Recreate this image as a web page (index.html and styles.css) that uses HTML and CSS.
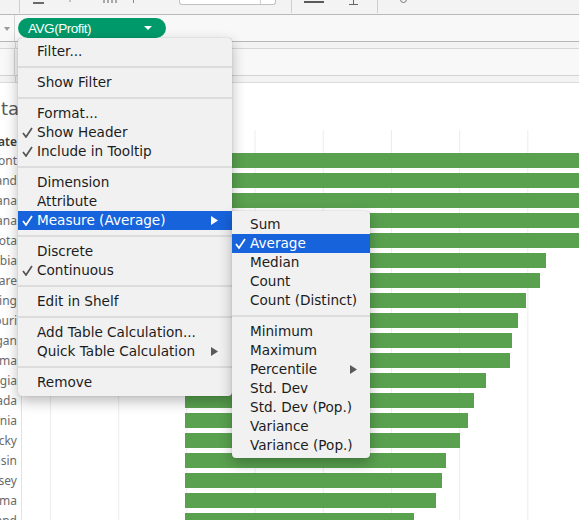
FILE: index.html
```html
<!DOCTYPE html>
<html>
<head>
<meta charset="utf-8">
<link rel="stylesheet" href="styles.css">
</head>
<body>
<div class="toolbar">
  <div class="tb-vline tb-a"></div>
  <div class="tb-under"></div>
  <div class="tb-dot"></div>
  <div class="tb-bars"><i></i><i></i><i></i><i></i></div>
  <div class="tb-tick"></div>
  <div class="tb-box"><div class="tb-box-div"></div></div>
  <div class="tb-vline tb-b"></div>
  <div class="tb-line"></div>
  <div class="tb-perp"></div>
  <div class="tb-vline tb-c"></div>
  <div class="tb-ring"></div>
</div>

<div class="shelf">
  <div class="shelf-head"><svg width="6" height="4" viewBox="0 0 6 4"><polygon points="0,0 6,0 3,4" fill="#9a9a9a"/></svg></div>
  <div class="pill">AVG(Profit)<svg class="pill-caret" width="8" height="4" viewBox="0 0 8 4"><polygon points="0,0 8,0 4,4" fill="#fff"/></svg></div>
</div>
<div class="band"></div>
<div class="shelf shelf-cols">
  <div class="shelf-head"></div>
</div>
<div class="band band-2"></div>

<div class="title">ta</div>

<div class="chart">
  <div class="labels">
    <div class="label label-head"><span>State</span></div>
    <div class="label"><span>Vermont</span></div>
    <div class="label"><span>Rhode Island</span></div>
    <div class="label"><span>Indiana</span></div>
    <div class="label"><span>Montana</span></div>
    <div class="label"><span>Minnesota</span></div>
    <div class="label"><span>District of Columbia</span></div>
    <div class="label"><span>Delaware</span></div>
    <div class="label"><span>Wyoming</span></div>
    <div class="label"><span>Missouri</span></div>
    <div class="label"><span>Michigan</span></div>
    <div class="label"><span>Oklahoma</span></div>
    <div class="label"><span>Georgia</span></div>
    <div class="label"><span>Nevada</span></div>
    <div class="label"><span>Virginia</span></div>
    <div class="label"><span>Kentucky</span></div>
    <div class="label"><span>Wisconsin</span></div>
    <div class="label"><span>New Jersey</span></div>
    <div class="label"><span>Alabama</span></div>
    <div class="label"><span>Maryland</span></div>
  </div>
  <div class="plot">
    <div class="row row-head"></div>
    <div class="row"><div class="bar" style="width:420px"></div></div>
    <div class="row"><div class="bar" style="width:420px"></div></div>
    <div class="row"><div class="bar" style="width:420px"></div></div>
    <div class="row"><div class="bar" style="width:420px"></div></div>
    <div class="row"><div class="bar" style="width:420px"></div></div>
    <div class="row"><div class="bar" style="width:361px"></div></div>
    <div class="row"><div class="bar" style="width:355px"></div></div>
    <div class="row"><div class="bar" style="width:341px"></div></div>
    <div class="row"><div class="bar" style="width:333px"></div></div>
    <div class="row"><div class="bar" style="width:327px"></div></div>
    <div class="row"><div class="bar" style="width:325px"></div></div>
    <div class="row"><div class="bar" style="width:301px"></div></div>
    <div class="row"><div class="bar" style="width:289px"></div></div>
    <div class="row"><div class="bar" style="width:283px"></div></div>
    <div class="row"><div class="bar" style="width:275px"></div></div>
    <div class="row"><div class="bar" style="width:261px"></div></div>
    <div class="row"><div class="bar" style="width:257px"></div></div>
    <div class="row"><div class="bar" style="width:251px"></div></div>
    <div class="row"><div class="bar" style="width:229px"></div></div>
  </div>
</div>

<div class="menu">
  <div class="item"><span class="chk"></span>Filter...</div>
  <div class="sep"></div>
  <div class="item"><span class="chk"></span>Show Filter</div>
  <div class="sep"></div>
  <div class="item"><span class="chk"></span>Format...</div>
  <div class="item"><span class="chk"><svg width="11" height="11" viewBox="0 0 11 11"><path d="M1 6 L4 10 L10 1" fill="none" stroke="currentColor" stroke-width="1.7"/></svg></span>Show Header</div>
  <div class="item"><span class="chk"><svg width="11" height="11" viewBox="0 0 11 11"><path d="M1 6 L4 10 L10 1" fill="none" stroke="currentColor" stroke-width="1.7"/></svg></span>Include in Tooltip</div>
  <div class="sep"></div>
  <div class="item"><span class="chk"></span>Dimension</div>
  <div class="item"><span class="chk"></span>Attribute</div>
  <div class="item item-on"><span class="chk"><svg width="11" height="11" viewBox="0 0 11 11"><path d="M1 6 L4 10 L10 1" fill="none" stroke="currentColor" stroke-width="1.7"/></svg></span>Measure (Average)<svg class="arrow" width="7" height="9" viewBox="0 0 7 9"><polygon points="0,0 7,4.5 0,9" fill="#fff"/></svg></div>
  <div class="sep"></div>
  <div class="item"><span class="chk"></span>Discrete</div>
  <div class="item"><span class="chk"><svg width="11" height="11" viewBox="0 0 11 11"><path d="M1 6 L4 10 L10 1" fill="none" stroke="currentColor" stroke-width="1.7"/></svg></span>Continuous</div>
  <div class="sep"></div>
  <div class="item"><span class="chk"></span>Edit in Shelf</div>
  <div class="sep"></div>
  <div class="item"><span class="chk"></span>Add Table Calculation...</div>
  <div class="item"><span class="chk"></span>Quick Table Calculation<svg class="arrow" width="7" height="9" viewBox="0 0 7 9"><polygon points="0,0 7,4.5 0,9" fill="#5a5a5a"/></svg></div>
  <div class="sep"></div>
  <div class="item"><span class="chk"></span>Remove</div>
</div>

<div class="submenu">
  <div class="item"><span class="chk"></span>Sum</div>
  <div class="item item-on"><span class="chk"><svg width="11" height="11" viewBox="0 0 11 11"><path d="M1 6 L4 10 L10 1" fill="none" stroke="currentColor" stroke-width="1.7"/></svg></span>Average</div>
  <div class="item"><span class="chk"></span>Median</div>
  <div class="item"><span class="chk"></span>Count</div>
  <div class="item"><span class="chk"></span>Count (Distinct)</div>
  <div class="sep"></div>
  <div class="item"><span class="chk"></span>Minimum</div>
  <div class="item"><span class="chk"></span>Maximum</div>
  <div class="item"><span class="chk"></span>Percentile<svg class="arrow" width="7" height="9" viewBox="0 0 7 9"><polygon points="0,0 7,4.5 0,9" fill="#5a5a5a"/></svg></div>
  <div class="item"><span class="chk"></span>Std. Dev</div>
  <div class="item"><span class="chk"></span>Std. Dev (Pop.)</div>
  <div class="item"><span class="chk"></span>Variance</div>
  <div class="item"><span class="chk"></span>Variance (Pop.)</div>
</div>
</body>
</html>
```

FILE: styles.css
```css
html, body {
  margin: 0;
  padding: 0;
}
body {
  width: 579px;
  height: 520px;
  overflow: hidden;
  position: relative;
  background: #fff;
  font-family: "DejaVu Sans", sans-serif;
}

/* toolbar (cut off at top) */
.toolbar {
  height: 14px;
  background: #f3f3f3;
  border-bottom: 1px solid #b9b9b9;
  display: flex;
  align-items: flex-start;
  overflow: hidden;
}
.tb-vline {
  width: 1px;
  height: 13px;
  background: #cfcfcf;
}
.tb-a { margin-left: 19px; }
.tb-under {
  margin-left: 13px;
  margin-top: 2px;
  width: 11px;
  height: 2px;
  background: #6a6a6a;
}
.tb-dot {
  margin-left: 25px;
  width: 2px;
  height: 2px;
  background: #c4c4c4;
}
.tb-bars {
  margin-left: 32px;
  display: flex;
  gap: 2px;
}
.tb-bars i {
  display: block;
  width: 2px;
  height: 3px;
  background: #a8a8a8;
}
.tb-tick {
  margin-left: 16px;
  width: 1px;
  height: 3px;
  background: #8a8a8a;
}
.tb-box {
  margin-left: 45px;
  width: 95px;
  height: 4px;
  background: #fff;
  border: 1px solid #c2c2c2;
  border-top: none;
  border-radius: 0 0 3px 3px;
  display: flex;
}
.tb-box-div {
  margin-left: 80px;
  width: 1px;
  height: 4px;
  background: #d0d0d0;
}
.tb-b { margin-left: 15px; }
.tb-line {
  margin-left: 12px;
  margin-top: 1px;
  width: 20px;
  height: 2px;
  background: #5a5a5a;
}
.tb-perp {
  margin-left: 25px;
  width: 9px;
  height: 4px;
  border-bottom: 1px solid #666;
  background: linear-gradient(90deg, transparent 4px, #666 4px, #666 5px, transparent 5px);
}
.tb-c { margin-left: 19px; }
.tb-ring {
  margin-left: 22px;
  margin-top: -4px;
  width: 5px;
  height: 5px;
  border: 1px solid #777;
  border-radius: 50%;
}

/* shelves */
.shelf {
  height: 26px;
  background: #f8f8f8;
  border-bottom: 1px solid #b7b7b7;
  display: flex;
  align-items: center;
}
.shelf-cols {
  border-bottom-color: #d3d3d3;
}
.shelf-head {
  width: 15px;
  align-self: stretch;
  border-right: 1px solid #d3d3d3;
  display: flex;
  align-items: center;
  justify-content: center;
  padding-top: 2px;
  box-sizing: border-box;
}
.band {
  height: 6px;
  background: linear-gradient(90deg, transparent 15px, #d3d3d3 15px, #d3d3d3 16px, transparent 16px), #f3f3f3;
  border-bottom: 1px solid #d6d6d6;
}
.band-2 {
  border-bottom-color: #dcdcdc;
}
.pill {
  margin-left: 3px;
  width: 148px;
  height: 20px;
  box-sizing: border-box;
  border-radius: 10px;
  background: #009a6a;
  color: #fff;
  font-family: "Liberation Sans", Arial, sans-serif;
  font-size: 13.5px;
  letter-spacing: -0.45px;
  display: flex;
  align-items: center;
  padding-left: 10px;
}
.pill-caret {
  margin-left: auto;
  margin-right: 14px;
}

/* title */
.title {
  height: 47px;
  box-sizing: border-box;
  padding: 16px 0 0 1px;
  font-size: 18px;
  line-height: 20px;
  color: #5a5a5a;
  white-space: nowrap;
}

/* chart */
.chart {
  display: flex;
}
.labels {
  width: 21px;
  border-right: 1px solid #e2e2e2;
  flex: none;
}
.label {
  height: 20px;
  box-sizing: border-box;
  padding-right: 4px;
  display: flex;
  justify-content: flex-end;
  align-items: center;
  overflow: hidden;
  white-space: nowrap;
  font-family: "Noto Sans", sans-serif;
  font-size: 12px;
  color: #6a6a6a;
}
.label span {
  flex: none;
}
.label-head {
  align-items: flex-end;
  color: #3c3c3c;
  font-weight: 600;
}
.plot {
  flex: 1;
  background-image: linear-gradient(90deg, #ececec 1px, transparent 1px);
  background-size: 68.2px 100%;
  background-position: 28px 0;
}
.row {
  height: 20px;
  box-sizing: border-box;
  padding-top: 3px;
}
.bar {
  margin-left: 163px;
  height: 15px;
  background: #59a14f;
}

/* context menu */
.menu, .submenu {
  position: absolute;
  background: #f1f1f1;
  border-radius: 4px;
  box-shadow: 0 5px 14px rgba(0, 0, 0, 0.28), 0 0 1px rgba(0, 0, 0, 0.35);
  font-size: 13.6px;
  color: #1c1c1c;
}
.menu {
  left: 18px;
  top: 38px;
  width: 214px;
  padding: 4px 0 4px;
}
.submenu {
  left: 232px;
  top: 211px;
  width: 138px;
  padding: 4px 0 3px;
  border-radius: 0 4px 4px 4px;
}
.item {
  height: 19px;
  line-height: 19px;
  display: flex;
  align-items: center;
  padding-left: 4px;
  white-space: nowrap;
}
.submenu .item {
  padding-left: 3px;
}
.chk {
  width: 15px;
  height: 19px;
  flex: none;
  color: #555;
  display: flex;
  align-items: center;
}
.item-on {
  background: #1763db;
  color: #fff;
}
.item-on .chk {
  color: #fff;
}
.arrow {
  margin-left: auto;
  margin-right: 14px;
}
.submenu .arrow {
  margin-right: 13px;
}
.sep {
  height: 2px;
  margin: 5px 0;
  background: #dcdcdc;
}
```
